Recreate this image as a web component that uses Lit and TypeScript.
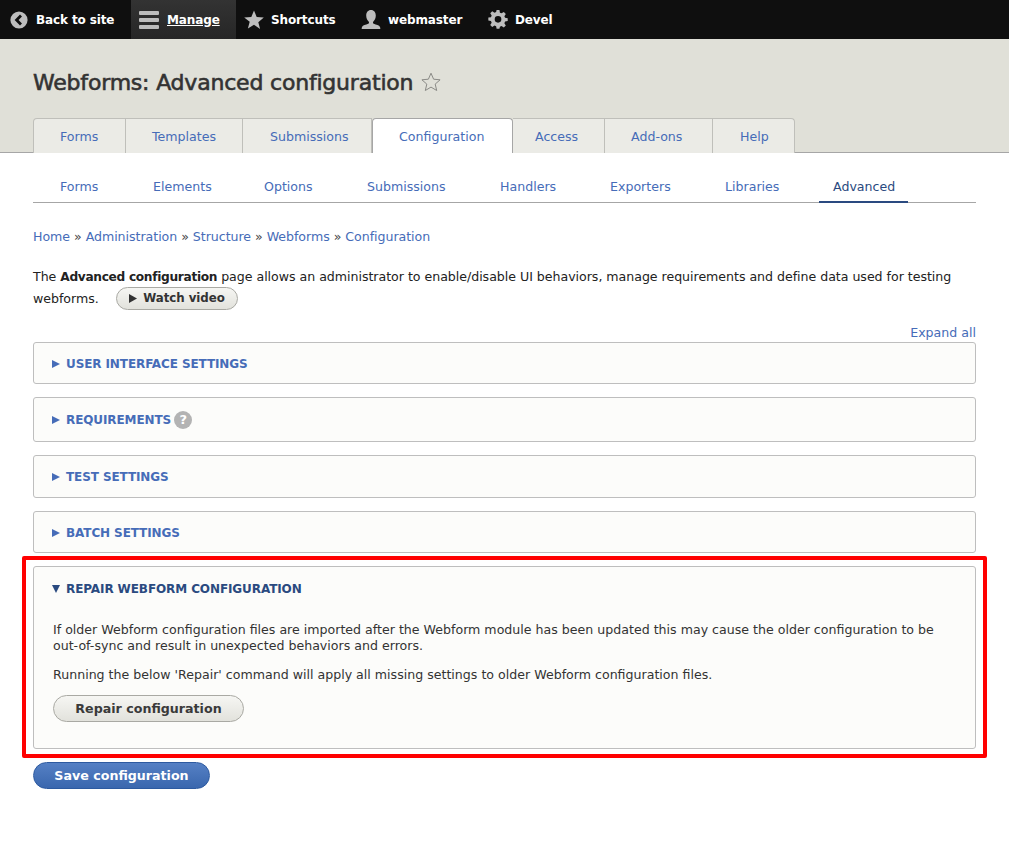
import { LitElement, html, css, svg } from "lit";
import { customElement } from "lit/decorators.js";

const icons = {
  back: svg`<circle cx="9" cy="9" r="8.6" fill="#bdbdbd"/><path d="M11 4.6 6.6 9l4.4 4.4" fill="none" stroke="#0f0f0f" stroke-width="2.8"/>`,
  menu: svg`<rect x="0" y="1" width="20" height="4" rx="1" fill="#bdbdbd"/><rect x="0" y="8" width="20" height="4" rx="1" fill="#bdbdbd"/><rect x="0" y="15" width="20" height="4" rx="1" fill="#bdbdbd"/>`,
  star: svg`<path d="M10 .5l2.7 6.6 7.1.5-5.500 4.600 1.800 6.900L10 14.800l-6.100 3.800 1.800-6.900L.2 7.600l7.100-.5z" fill="#bdbdbd"/>`,
  user: svg`<path d="M10 0c3 0 4.800 2.400 4.800 5.600 0 2.600-1.200 5-2.600 6.200-.4.800-.2 1.600.6 2 2.400.9 5.400 1.500 6.200 3.200.3.700.3 1.600.3 2H.7c0-.4 0-1.300.3-2 .8-1.700 3.800-2.300 6.200-3.200.8-.4 1-1.200.6-2C6.400 10.600 5.200 8.200 5.200 5.600 5.200 2.400 7 0 10 0z" fill="#bdbdbd"/>`,
  gear: svg`<path fill-rule="evenodd" d="M8 0h3l.5 2.800 1.700.7L15.600 2l2.100 2.100-1.500 2.400.7 1.700 2.800.5v3l-2.800.5-.7 1.700 1.500 2.400-2.100 2.100-2.400-1.500-1.700.7L11 19.800H8l-.5-2.800-1.700-.7-2.400 1.500-2.100-2.100 1.500-2.400-.7-1.700L-.7 11V8l2.800-.5.700-1.700L1.300 3.400 3.400 1.300l2.400 1.500 1.700-.7zM9.500 6.300a3.500 3.500 0 1 0 0 7 3.500 3.500 0 0 0 0-7z" fill="#bdbdbd"/>`,
};

@customElement("app-root")
export class AppRoot extends LitElement {
  static styles = css`
    :host { display: block; position: relative; font-family: "DejaVu Sans", sans-serif; font-size: 12.6px; color: #222; background: #fff; height: 850px; overflow: hidden; }
    a { color: #466cb8; text-decoration: none; }
    .toolbar { display: flex; align-items: center; height: 39px; background: #0f0f0f; color: #fff; font-weight: 700; font-size: 12px; letter-spacing: -.12px; }
    .tool { display: flex; align-items: center; height: 39px; gap: 7px; }
    .tool svg { display: block; overflow: visible; }
    .tool.back { margin-left: 10px; width: 121px; gap: 8px; }
    .tool.manage { background: linear-gradient(#333, #262626); width: 105px; box-sizing: border-box; padding-left: 8px; gap: 8px; text-decoration: underline; }
    .tool.shortcuts { margin-left: 8px; width: 117px; }
    .tool.user { width: 128px; }
    .head { background: #e0e0d8; height: 113px; border-bottom: 1px solid #a6a6a6; padding: 0 33px; display: flex; flex-direction: column; }
    h1 { margin: 0; padding-top: 29px; height: 50px; font-size: 22px; line-height: 29px; font-weight: 400; color: #333; -webkit-text-stroke: .6px #333; letter-spacing: -.2px; display: flex; align-items: flex-start; gap: 8px; }
    h1 svg { margin-top: 4px; -webkit-text-stroke: 0; }
    .tabs { display: flex; height: 34px; }
    .tab { box-sizing: border-box; height: 35px; display: flex; align-items: center; background: #ebebe6; border: 1px solid #bfbfba; border-left: 0; border-bottom: 0; padding-top: 1px; }
    .tab:first-child { border-left: 1px solid #bfbfba; border-top-left-radius: 4px; }
    .tab:last-child { border-top-right-radius: 4px; }
    .tab.on { background: #fff; border-color: #a6a6a6; border-left: 1px solid #a6a6a6; border-radius: 4px 4px 0 0; position: relative; z-index: 1; }
    .main { padding: 0 33px; }
    .sub { display: flex; height: 49px; border-bottom: 1px solid #a6a6a6; box-sizing: border-box; margin-top: 1px; }
    .sub a { display: flex; align-items: center; height: 49px; box-sizing: border-box; padding-top: 18px; border-bottom: 2px solid transparent; }
    .sub a.on { color: #2a4a80; border-bottom-color: #2a4a80; }
    .crumb { margin-top: 25px; line-height: 17px; letter-spacing: -.04px; }
    .crumb span { color: #444; }
    .intro { margin: 21px 0 0; line-height: 21px; letter-spacing: -.03px; }
    .intro b { font-size: 12.2px; letter-spacing: -.32px; }
    .watch { display: inline-flex; align-items: center; gap: 6px; height: 23px; margin: -3px 0 -3px 13px; box-sizing: border-box; padding: 0 12.5px; border: 1px solid #a9a9a3; border-radius: 12px; background: linear-gradient(#f6f6f3, #e2e2dc); font-weight: 700; font-size: 11.8px; color: #333; }
    .expand { text-align: right; margin-top: 16px; line-height: 16px; height: 17px; }
    .fs { border: 1px solid #bebebe; border-radius: 3px; background: #fcfcfa; margin-bottom: 13px; box-sizing: border-box; }
    .sum { display: flex; align-items: center; box-sizing: border-box; height: 100%; padding-left: 18px; gap: 6px; font-weight: 700; font-size: 12px; color: #466cb8; letter-spacing: -.1px; }
    .tri { width: 0; height: 0; border-left: 8px solid currentColor; border-top: 4.5px solid transparent; border-bottom: 4.5px solid transparent; }
    .help { width: 18px; height: 18px; border-radius: 50%; background: #b3b3b3; color: #fff; font-size: 13px; display: flex; align-items: center; justify-content: center; margin-left: -3px; }
    .h42 { height: 42px; }
    .h42 .sum { padding-top: 2px; }
    .h43 { height: 43px; }
    .h45 { height: 45px; }
    .open { height: 183px; }
    .open .sum { height: 43px; color: #2a4a80; }
    .open .tri { border-top: 8px solid currentColor; border-left: 4.5px solid transparent; border-right: 4.5px solid transparent; border-bottom: 0; margin-right: 0; }
    .body { padding: 12px 19px 0; line-height: 16px; color: #333; }
    .body p { margin: 0 0 13px; }
    .btn { display: inline-flex; align-items: center; justify-content: center; box-sizing: border-box; height: 27px; border-radius: 14px; font-weight: 700; font-size: 12.65px; }
    .repair { width: 191px; margin-top: -1px; border: 1px solid #a9a9a3; background: linear-gradient(#f6f6f3, #e2e2dc); color: #3a3a3a; }
    .save { width: 177px; border: 1px solid #2d5aa0; background: linear-gradient(#5580c4, #3a67ae); color: #fff; }
    .mark { position: absolute; left: 22px; top: 556px; width: 965px; height: 202px; box-sizing: border-box; border: 4px solid #f00; border-radius: 2px; pointer-events: none; }
  `;

  render() {
    const ic = (p: unknown, w = 20, h = 20, vb = "0 0 20 20") => html`<svg width=${w} height=${h} viewBox=${vb}>${p}</svg>`;
    const tabs: [string, number, number][] = [["Forms", 93, 26], ["Templates", 117, 26], ["Submissions", 129, 27], ["Configuration", 141, 26], ["Access", 92, 22], ["Add-ons", 108, 26], ["Help", 82, 27]];
    const sub: [string, number, number][] = [["Forms", 93, 27], ["Elements", 111, 27], ["Options", 103, 27], ["Submissions", 133, 27], ["Handlers", 110, 27], ["Exporters", 115, 27], ["Libraries", 121, 27], ["Advanced", 89, 14]];
    const crumbs = ["Home", "Administration", "Structure", "Webforms", "Configuration"];
    return html`
      <div class="toolbar">
        <div class="tool back">${ic(icons.back, 18, 18, "0 0 18 18")}<span>Back to site</span></div>
        <div class="tool manage">${ic(icons.menu)}<span>Manage</span></div>
        <div class="tool shortcuts">${ic(icons.star)}<span>Shortcuts</span></div>
        <div class="tool user">${ic(icons.user)}<span>webmaster</span></div>
        <div class="tool">${ic(icons.gear, 19, 19)}<span>Devel</span></div>
      </div>
      <div class="head">
        <h1>Webforms: Advanced configuration
          <svg width="20" height="20" viewBox="0 0 20 20"><path d="M10 1.200l2.600 6 6.500.6-4.900 4.300 1.500 6.400-5.700-3.400-5.700 3.400 1.500-6.400L.9 7.800l6.500-.6z" fill="none" stroke="#8a8a86" stroke-width="1"/></svg>
        </h1>
        <div class="tabs">
          ${tabs.map(([t, w, p]) => html`<a class="tab ${t === "Configuration" ? "on" : ""}" style="width:${w}px;padding-left:${p}px">${t}</a>`)}
        </div>
      </div>
      <div class="main">
        <div class="sub">
          ${sub.map(([t, w, p]) => html`<a class=${t === "Advanced" ? "on" : ""} style="width:${w}px;padding-left:${p}px">${t}</a>`)}
        </div>
        <div class="crumb">${crumbs.map((c, i) => html`${i ? html`<span> » </span>` : ""}<a>${c}</a>`)}</div>
        <p class="intro">The <b>Advanced configuration</b> page allows an administrator to enable/disable UI behaviors, manage requirements and define data used for testing webforms. <span class="watch"><svg width="8" height="9" viewBox="0 0 8 9"><path d="M0 0l8 4.500L0 9z" fill="#333"/></svg>Watch video</span></p>
        <div class="expand"><a>Expand all</a></div>
        <div class="fs h42"><div class="sum"><i class="tri"></i>USER INTERFACE SETTINGS</div></div>
        <div class="fs h45"><div class="sum"><i class="tri"></i>REQUIREMENTS<span class="help">?</span></div></div>
        <div class="fs h43"><div class="sum"><i class="tri"></i>TEST SETTINGS</div></div>
        <div class="fs h42"><div class="sum"><i class="tri"></i>BATCH SETTINGS</div></div>
        <div class="fs open">
          <div class="sum"><i class="tri"></i>REPAIR WEBFORM CONFIGURATION</div>
          <div class="body">
            <p>If older Webform configuration files are imported after the Webform module has been updated this may cause the older configuration to be out-of-sync and result in unexpected behaviors and errors.</p>
            <p>Running the below 'Repair' command will apply all missing settings to older Webform configuration files.</p>
            <span class="btn repair">Repair configuration</span>
          </div>
        </div>
        <span class="btn save">Save configuration</span>
      </div>
      <div class="mark"></div>
    `;
  }
}
